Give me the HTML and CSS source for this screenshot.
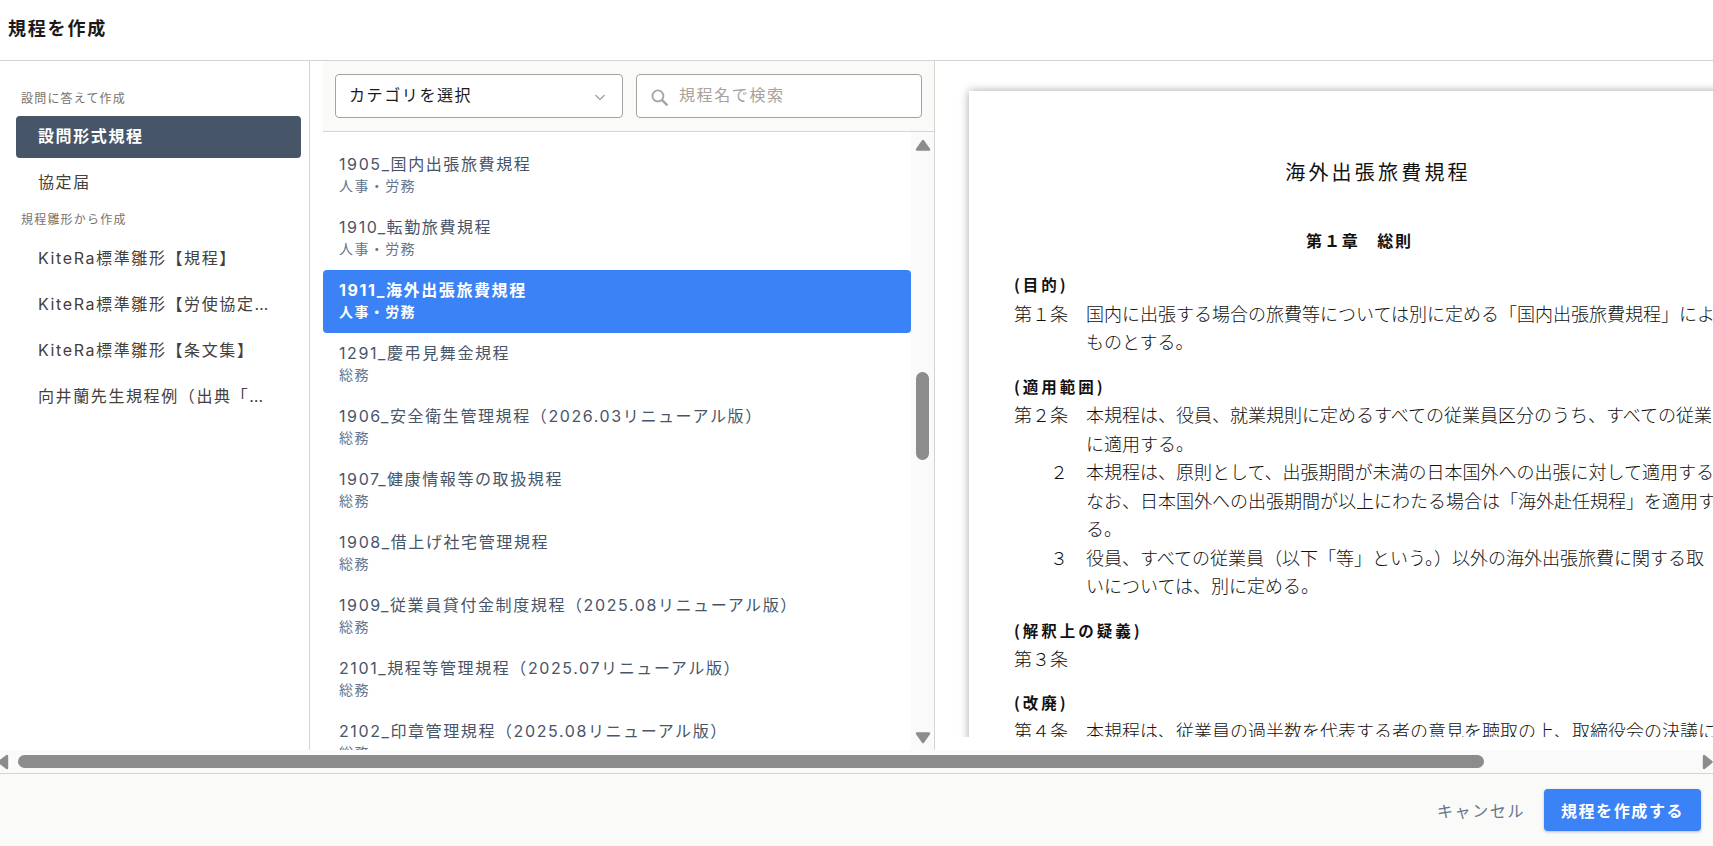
FILE: index.html
```html
<!DOCTYPE html>
<html lang="ja">

<head>
    <meta charset="UTF-8">
    <meta name="viewport" content="width=device-width, initial-scale=1.0">
    <title>規程を作成</title>
    <link rel="stylesheet" href="styles.css">
</head>

<body>
    <header class="page-header">
        <h1>規程を作成</h1>
    </header>

    <div class="main">
        <!-- Left menu -->
        <nav class="sidebar">
            <p class="menu-label">設問に答えて作成</p>
            <a class="menu-item active">設問形式規程</a>
            <a class="menu-item">協定届</a>
            <p class="menu-label">規程雛形から作成</p>
            <a class="menu-item">KiteRa標準雛形【規程】</a>
            <a class="menu-item">KiteRa標準雛形【労使協定届】</a>
            <a class="menu-item">KiteRa標準雛形【条文集】</a>
            <a class="menu-item">向井蘭先生規程例&#xFF08;出典「労使協定」&#xFF09;</a>
        </nav>

        <!-- Template list -->
        <section class="list-panel">
            <div class="filters">
                <div class="select-box">
                    <span>カテゴリを選択</span>
                    <svg class="chevron" viewBox="0 0 12 12" width="12" height="12">
                        <path d="M1.5 4l4.5 4.5L10.5 4" fill="none" stroke="#a8a29e" stroke-width="1.4" />
                    </svg>
                </div>
                <div class="search-box">
                    <svg viewBox="0 0 18 18" width="19" height="19">
                        <circle cx="7.5" cy="7.5" r="5.2" fill="none" stroke="#a8a29e" stroke-width="1.7" />
                        <path d="M11.2 11.2l5.3 5.3" stroke="#a8a29e" stroke-width="2.2" />
                    </svg>
                    <span>規程名で検索</span>
                </div>
            </div>
            <div class="list-body">
                <ul class="template-list">
                    <li><strong>1905_国内出張旅費規程</strong><small>人事・労務</small></li>
                    <li><strong>1910_転勤旅費規程</strong><small>人事・労務</small></li>
                    <li class="selected"><strong>1911_海外出張旅費規程</strong><small>人事・労務</small></li>
                    <li><strong>1291_慶弔見舞金規程</strong><small>総務</small></li>
                    <li><strong>1906_安全衛生管理規程&#xFF08;2026.03リニューアル版&#xFF09;</strong><small>総務</small></li>
                    <li><strong>1907_健康情報等の取扱規程</strong><small>総務</small></li>
                    <li><strong>1908_借上げ社宅管理規程</strong><small>総務</small></li>
                    <li><strong>1909_従業員貸付金制度規程&#xFF08;2025.08リニューアル版&#xFF09;</strong><small>総務</small></li>
                    <li><strong>2101_規程等管理規程&#xFF08;2025.07リニューアル版&#xFF09;</strong><small>総務</small></li>
                    <li><strong>2102_印章管理規程&#xFF08;2025.08リニューアル版&#xFF09;</strong><small>総務</small></li>
                </ul>
                <div class="v-scroll">
                    <svg viewBox="0 0 16 12" width="16" height="12">
                        <path d="M8 2L14 10.5H2z" fill="#8c8c8c" stroke="#8c8c8c" stroke-width="2.4" stroke-linejoin="round" />
                    </svg>
                    <div class="v-thumb"></div>
                    <svg viewBox="0 0 16 12" width="16" height="12">
                        <path d="M8 10L14 1.5H2z" fill="#8c8c8c" stroke="#8c8c8c" stroke-width="2.4" stroke-linejoin="round" />
                    </svg>
                </div>
            </div>
        </section>

        <!-- Document preview -->
        <section class="preview">
            <div class="preview-scroll">
                <article class="doc">
                    <div class="doc-head">
                        <h2>海外出張旅費規程</h2>
                        <h3>第&#xFF11;章&#x3000;総則</h3>
                    </div>

                    <section class="doc-section">
                        <h4>(目的)</h4>
                        <div class="clause">
                            <span class="no">第&#xFF11;条</span>
                            <p>国内に出張する場合の旅費等については別に定める「国内出張旅費規程」によ<br>ものとする。</p>
                        </div>
                    </section>

                    <section class="doc-section">
                        <h4>(適用範囲)</h4>
                        <div class="clause">
                            <span class="no">第&#xFF12;条</span>
                            <p>本規程は、役員、就業規則に定めるすべての従業員区分のうち、すべての従業<br>に適用する。</p>
                        </div>
                        <div class="clause">
                            <span class="no sub">&#xFF12;</span>
                            <p>本規程は、原則として、出張期間が未満の日本国外への出張に対して適用する<br>なお、日本国外への出張期間が以上にわたる場合は「海外赴任規程」を適用す<br>る。</p>
                        </div>
                        <div class="clause">
                            <span class="no sub">&#xFF13;</span>
                            <p>役員、すべての従業員&#xFF08;以下「等」という。&#xFF09;以外の海外出張旅費に関する取<br>いについては、別に定める。</p>
                        </div>
                    </section>

                    <section class="doc-section">
                        <h4>(解釈上の疑義)</h4>
                        <div class="clause">
                            <span class="no">第&#xFF13;条</span>
                            <p></p>
                        </div>
                    </section>

                    <section class="doc-section">
                        <h4>(改廃)</h4>
                        <div class="clause">
                            <span class="no">第&#xFF14;条</span>
                            <p>本規程は、従業員の過半数を代表する者の意見を聴取の上、取締役会の決議に</p>
                        </div>
                    </section>
                </article>
            </div>
        </section>
    </div>

    <div class="h-scroll">
        <svg viewBox="0 0 10 18" width="10" height="18">
            <path d="M-1 9L7 3V15z" fill="#8c8c8c" stroke="#8c8c8c" stroke-width="2.4" stroke-linejoin="round" />
        </svg>
        <div class="h-thumb"></div>
        <svg viewBox="0 0 11 18" width="11" height="18">
            <path d="M9.5 9L2 3V15z" fill="#8c8c8c" stroke="#8c8c8c" stroke-width="2.4" stroke-linejoin="round" />
        </svg>
    </div>

    <footer class="page-footer">
        <button class="cancel-btn">キャンセル</button>
        <button class="create-btn">規程を作成する</button>
    </footer>
</body>

</html>
```

FILE: styles.css
```css
* {
    margin: 0;
    padding: 0;
    box-sizing: border-box;
    font-family: Inter, "Noto Sans CJK JP", sans-serif;
}

html,
body {
    height: 100%;
    overflow: hidden;
}

body {
    display: flex;
    flex-direction: column;
    background-color: white;
}

.page-header {
    flex: none;
    height: 61px;
    display: flex;
    align-items: center;
    padding-left: 8px;
    padding-bottom: 6px;
    border-bottom: 1px solid #d6d3d1;
}

h1 {
    font-size: 18px;
    letter-spacing: 0.1em;
    font-weight: 700;
    color: #1c1917;
}

.main {
    flex: none;
    height: 689px;
    display: flex;
    overflow: hidden;
}

/* left menu */
.sidebar {
    flex: none;
    width: 310px;
    padding: 28px 8px 0 16px;
    border-right: 1px solid #d6d3d1;
}

.menu-label {
    height: 20px;
    margin-left: 5px;
    margin-bottom: 7px;
    font-size: 12px;
    line-height: 20px;
    letter-spacing: 0.1em;
    color: #78716c;
}

.menu-item {
    display: block;
    height: 42px;
    margin-bottom: 4px;
    padding: 0 32px 0 22px;
    border-radius: 4px;
    font-size: 16px;
    line-height: 41px;
    letter-spacing: 0.1em;
    color: #44403c;
    white-space: nowrap;
    overflow: hidden;
    text-overflow: ellipsis;
}

.menu-item.active {
    background-color: #475569;
    color: white;
    font-weight: 700;
}

.menu-item + .menu-label {
    margin-top: 6px;
    margin-bottom: 8px;
}

/* template list */
.list-panel {
    flex: none;
    width: 625px;
    padding-left: 13px;
    display: flex;
    flex-direction: column;
    border-right: 1px solid #d6d3d1;
}

.filters {
    flex: none;
    height: 71px;
    display: flex;
    gap: 13px;
    padding: 13px 12px 0;
    background-color: #fafaf9;
    border-bottom: 1px solid #d6d3d1;
}

.select-box,
.search-box {
    height: 44px;
    display: flex;
    align-items: center;
    background-color: white;
    border: 1px solid #a8a29e;
    border-radius: 4px;
    font-size: 16px;
    letter-spacing: 0.1em;
}

.select-box {
    flex: none;
    width: 288px;
    justify-content: space-between;
    padding: 0 16px 4px 13px;
    color: #1c1917;
}

.chevron {
    margin-top: 6px;
}

.search-box {
    flex: 1;
    gap: 10px;
    padding: 0 0 4px 13px;
    color: #a8a29e;
}

.search-box svg {
    margin-top: 6px;
}

.list-body {
    flex: 1;
    min-height: 0;
    display: flex;
}

.template-list {
    flex: 1;
    list-style: none;
    padding-top: 12px;
    overflow: hidden;
}

.template-list li {
    height: 63px;
    padding: 8px 16px 0;
    border-radius: 4px;
}

.template-list strong,
.template-list small {
    display: block;
    letter-spacing: 0.1em;
    white-space: nowrap;
}

.template-list strong {
    font-size: 16px;
    font-weight: 400;
    line-height: 24px;
    color: #475569;
}

.template-list small {
    margin-top: -1px;
    font-size: 14px;
    line-height: 21px;
    color: #64748b;
}

.template-list .selected {
    background-color: #3b82f6;
}

.template-list .selected strong,
.template-list .selected small {
    color: white;
    font-weight: 700;
}

.v-scroll {
    flex: none;
    width: 23px;
    display: flex;
    flex-direction: column;
    align-items: center;
    padding: 7px 0 6px;
    background-color: #fafafa;
}

.v-thumb {
    width: 13px;
    height: 88px;
    margin-top: 221px;
    margin-bottom: auto;
    border-radius: 7px;
    background-color: #8c8c8c;
}

/* document preview */
.preview {
    flex: 1;
    min-width: 0;
    padding-bottom: 13px;
    background-color: white;
}

.preview-scroll {
    height: 100%;
    padding: 30px 0 0 34px;
    overflow: hidden;
}

.doc {
    width: 1000px;
    height: 900px;
    padding: 0 0 0 45px;
    background-color: white;
    box-shadow: 0 0 9px rgba(0, 0, 0, 0.35);
    color: #111;
}

.doc * {
    font-family: "Noto Sans CJK JP", sans-serif;
}

.doc-head {
    width: 728px;
    padding-top: 64px;
    text-align: center;
}

.doc-head h2 {
    font-size: 20px;
    font-weight: 400;
    line-height: 34px;
    letter-spacing: 3.2px;
}

.doc-head h3 {
    margin-top: 37px;
    margin-right: 37px;
    font-size: 16px;
    font-weight: 700;
    line-height: 28px;
    letter-spacing: 1.8px;
}

.doc-section {
    margin-top: 16px;
}

.doc-section:last-child {
    margin-top: 15px;
}

.doc-section h4 {
    font-size: 15.5px;
    font-weight: 700;
    line-height: 28.5px;
    letter-spacing: 3px;
}

.clause {
    display: flex;
    font-size: 18px;
    font-weight: 300;
    line-height: 28.5px;
    white-space: nowrap;
}

.clause .no {
    flex: none;
    width: 72px;
}

.clause .no.sub {
    padding-left: 36px;
}

/* page level horizontal scrollbar */
.h-scroll {
    flex: none;
    height: 23px;
    display: flex;
    align-items: center;
    background-color: #fafafa;
}

.h-scroll svg {
    flex: none;
}

.h-scroll svg:last-child {
    margin-left: auto;
}

.h-thumb {
    width: 1466px;
    height: 13px;
    margin-left: 8px;
    border-radius: 7px;
    background-color: #8c8c8c;
}

.page-footer {
    flex: 1;
    display: flex;
    justify-content: flex-end;
    align-items: center;
    gap: 19px;
    padding: 0 12px 0 0;
    background-color: #fafaf9;
    border-top: 1px solid #d6d3d1;
}

.page-footer button {
    border: none;
    background: none;
    font-size: 16px;
    letter-spacing: 0.1em;
    cursor: pointer;
}

.cancel-btn {
    color: #64748b;
}

.page-footer .create-btn {
    width: 157px;
    height: 42px;
    border-radius: 4px;
    background-color: #3b82f6;
    color: white;
    font-weight: 700;
    box-shadow: 0 1px 3px rgba(0, 0, 0, 0.25);
}
```
